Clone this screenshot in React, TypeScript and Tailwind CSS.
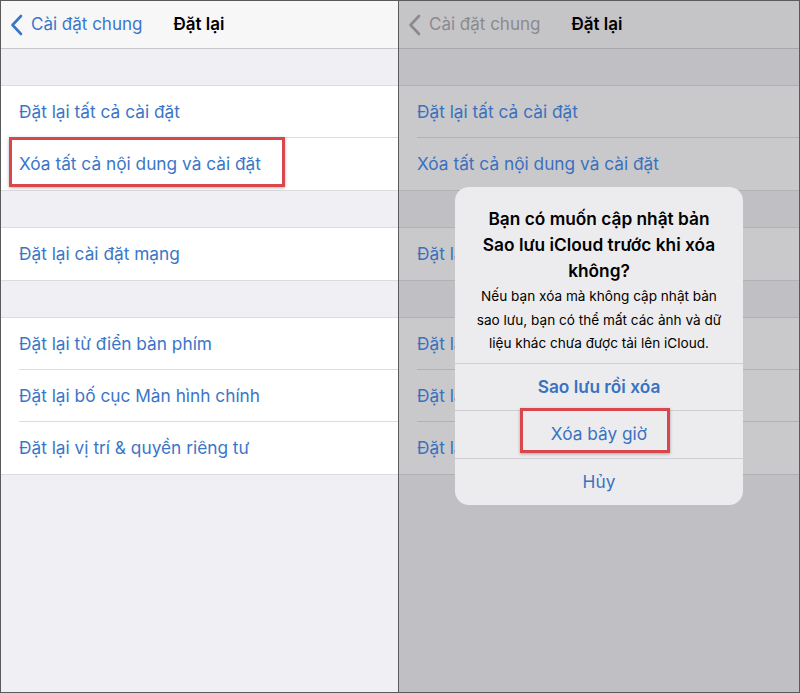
import React from 'react'

const font = { fontFamily: '"Inter", "Liberation Sans", "Noto Sans", sans-serif' }

interface Theme {
  nav: string
  navBorder: string
  back: string
  band: string
  row: string
  line: string
  link: string
}

const light: Theme = {
  nav: 'bg-[#f7f7f8]',
  navBorder: 'border-[#c8c8cc]',
  back: 'text-[#3a76c8]',
  band: 'bg-[#efeff4]',
  row: 'bg-white',
  line: 'border-[#dcdce0]',
  link: 'text-[#3a76c8]',
}

const dim: Theme = {
  nav: 'bg-[#c5c5c8]',
  navBorder: 'border-[#a8a8ac]',
  back: 'text-[#8a8a8e]',
  band: 'bg-[#bfbfc4]',
  row: 'bg-[#c9c9cc]',
  line: 'border-[#b2b2b6]',
  link: 'text-[#3b70bd]',
}

const groups = [
  ['Đặt lại tất cả cài đặt', 'Xóa tất cả nội dung và cài đặt'],
  ['Đặt lại cài đặt mạng'],
  ['Đặt lại từ điển bàn phím', 'Đặt lại bố cục Màn hình chính', 'Đặt lại vị trí & quyền riêng tư'],
]

function Chevron({ className }: { className: string }) {
  return (
    <svg width="13" height="22" viewBox="0 0 13 22" className={className}>
      <path d="M11 2 L2.5 11 L11 20" fill="none" stroke="currentColor" strokeWidth="2.6" strokeLinecap="round" strokeLinejoin="round" />
    </svg>
  )
}

function Settings({ t, highlight }: { t: Theme; highlight?: boolean }) {
  return (
    <div className={`flex flex-col h-full ${t.band}`}>
      {/* Nav bar */}
      <div className={`h-[48px] shrink-0 flex items-center border-b ${t.nav} ${t.navBorder}`}>
        <div className={`flex items-center pl-[9px] gap-[8px] ${t.back}`}>
          <Chevron className="" />
          <span className="text-[17px]">Cài đặt chung</span>
        </div>
        <span className="ml-[31px] text-[17px] font-semibold text-black">Đặt lại</span>
      </div>

      {groups.map((items, gi) => (
        <div key={gi} className="pt-[36px]">
          <div className={`border-y ${t.line} ${t.row}`}>
            {items.map((label, i) => (
              <div key={label} className="relative pl-[18px]">
                <div
                  className={`h-[52px] flex items-center text-[17.3px] ${t.link} ${
                    i < items.length - 1 ? `border-b ${t.line}` : ''
                  }`}
                >
                  {label}
                </div>
                {highlight && gi === 0 && i === 1 && (
                  <div className="absolute left-[8px] top-[-1px] w-[276px] h-[50px] border-[3px] border-[#d7474b] shadow-[0_1px_3px_rgba(0,0,0,0.3)]" />
                )}
              </div>
            ))}
          </div>
        </div>
      ))}
    </div>
  )
}

function Alert() {
  return (
    <div className="absolute left-[56px] top-[186px] w-[288px] rounded-[14px] bg-[#ececee] overflow-hidden">
      <div className="pt-[19px] pb-[7px] px-[10px] text-center">
        <div className="text-[17.3px] leading-[26px] font-semibold text-black">
          Bạn có muốn cập nhật bản
          <br />
          Sao lưu iCloud trước khi xóa
          <br />
          không?
        </div>
        <div className="mt-[1px] text-[13.6px] leading-[23.5px] text-black">
          Nếu bạn xóa mà không cập nhật bản
          <br />
          sao lưu, bạn có thể mất các ảnh và dữ
          <br />
          liệu khác chưa được tải lên iCloud.
        </div>
      </div>
      <div className="border-t border-[#cfcfd3] h-[47px] flex items-center justify-center text-[17.3px] font-semibold text-[#3a72c2]">
        Sao lưu rồi xóa
      </div>
      <div className="relative border-t border-[#cfcfd3] h-[48px] flex items-center justify-center text-[17.3px] text-[#3a72c2]">
        Xóa bây giờ
        <div className="absolute left-[65px] top-[-3px] w-[150px] h-[45px] border-[3px] border-[#d7474b] shadow-[0_1px_3px_rgba(0,0,0,0.3)]" />
      </div>
      <div className="border-t border-[#cfcfd3] h-[47px] flex items-center justify-center text-[17.3px] text-[#3a72c2]">
        Hủy
      </div>
    </div>
  )
}

export default function App() {
  return (
    <div className="w-[800px] h-[693px] flex border border-[#5a5a5a] overflow-hidden bg-white" style={font}>
      <div className="w-[397px] shrink-0 h-full">
        <Settings t={light} highlight />
      </div>
      <div className="w-px bg-[#5a5a5a] shrink-0" />
      <div className="relative flex-1 h-full">
        <Settings t={dim} />
        <Alert />
      </div>
    </div>
  )
}
